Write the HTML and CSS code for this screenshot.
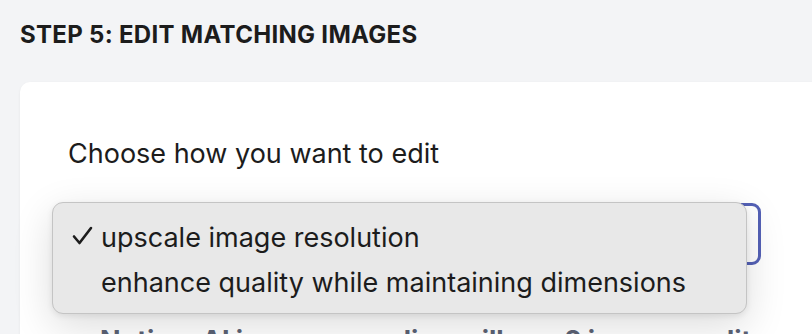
FILE: index.html
```html
<!DOCTYPE html>
<html lang="en">
<head>
    <meta charset="UTF-8">
    <meta name="viewport" content="width=device-width, initial-scale=1.0">
    <title>Step 5 - Edit Matching Images</title>
    <link rel="stylesheet" href="styles.css">
</head>
<body>
    <div class="page">
        <h2 class="step-title">STEP 5: EDIT MATCHING IMAGES</h2>

        <div class="card">
            <label class="field-label" for="edit-mode">Choose how you want to edit</label>

            <div class="select-wrap">
                <div class="select-box" id="edit-mode"></div>

                <!-- native popup menu, open -->
                <ul class="select-menu">
                    <li class="menu-item selected">
                        <svg class="check" width="22" height="20" viewBox="0 0 22 20">
                            <path d="M2 10.5 L7.5 17 L19 2" fill="none" stroke="#1c1c1c" stroke-width="2.6" stroke-linecap="round" stroke-linejoin="round"/>
                        </svg>
                        <span>upscale image resolution</span>
                    </li>
                    <li class="menu-item">
                        <span>enhance quality while maintaining dimensions</span>
                    </li>
                </ul>
            </div>

            <p class="notice">Notice: AI image upscaling will use 2 image credits</p>
        </div>
    </div>
</body>
</html>
```

FILE: styles.css
```css
:root {
    --page-bg: #f3f4f6;
    --card-bg: #ffffff;
    --text-color: #1d1d1f;
    --focus-color: #5461b6;
    --menu-bg: #e8e8e8;
    --menu-border: #c4c4c4;
    --muted: #5b6275;
}

* {
    margin: 0;
    padding: 0;
    box-sizing: border-box;
}

body {
    font-family: 'Inter', 'Liberation Sans', sans-serif;
    background: var(--page-bg);
    color: var(--text-color);
    overflow: hidden;
}

.page {
    padding: 20px 20px 0;
}

.step-title {
    font-size: 24px;
    font-weight: 700;
    letter-spacing: 0.3px;
    line-height: 30px;
    color: #1c1c1c;
}

.card {
    margin-top: 32px;
    width: 840px;
    background: var(--card-bg);
    border-radius: 10px;
    box-shadow: 0 1px 3px rgba(0, 0, 0, 0.06);
    padding: 56px 48px 40px;
}

.field-label {
    display: block;
    font-size: 27px;
    line-height: 32px;
    color: #1c1c1c;
}

.select-wrap {
    position: relative;
    margin-top: 33px;
    width: 693px;
}

.select-box {
    height: 62px;
    border: 3px solid var(--focus-color);
    border-radius: 9px;
    background: #fff;
}

.select-menu {
    position: absolute;
    left: -16px;
    top: -1px;
    width: 695px;
    height: 112px;
    list-style: none;
    background: var(--menu-bg);
    border: 1px solid var(--menu-border);
    border-radius: 11px;
    box-shadow: 0 12px 40px rgba(0, 0, 0, 0.14), 0 2px 6px rgba(0, 0, 0, 0.08);
    padding: 12px 0 0;
}

.menu-item {
    display: flex;
    align-items: center;
    height: 45px;
    padding-left: 48px;
    font-size: 27px;
    color: #1c1c1c;
    position: relative;
}

.check {
    position: absolute;
    left: 19px;
    top: 11px;
}

.notice {
    margin-top: 60px;
    padding-left: 32px;
    font-size: 27px;
    line-height: 32px;
    font-weight: 700;
    color: var(--muted);
    white-space: nowrap;
}
```
